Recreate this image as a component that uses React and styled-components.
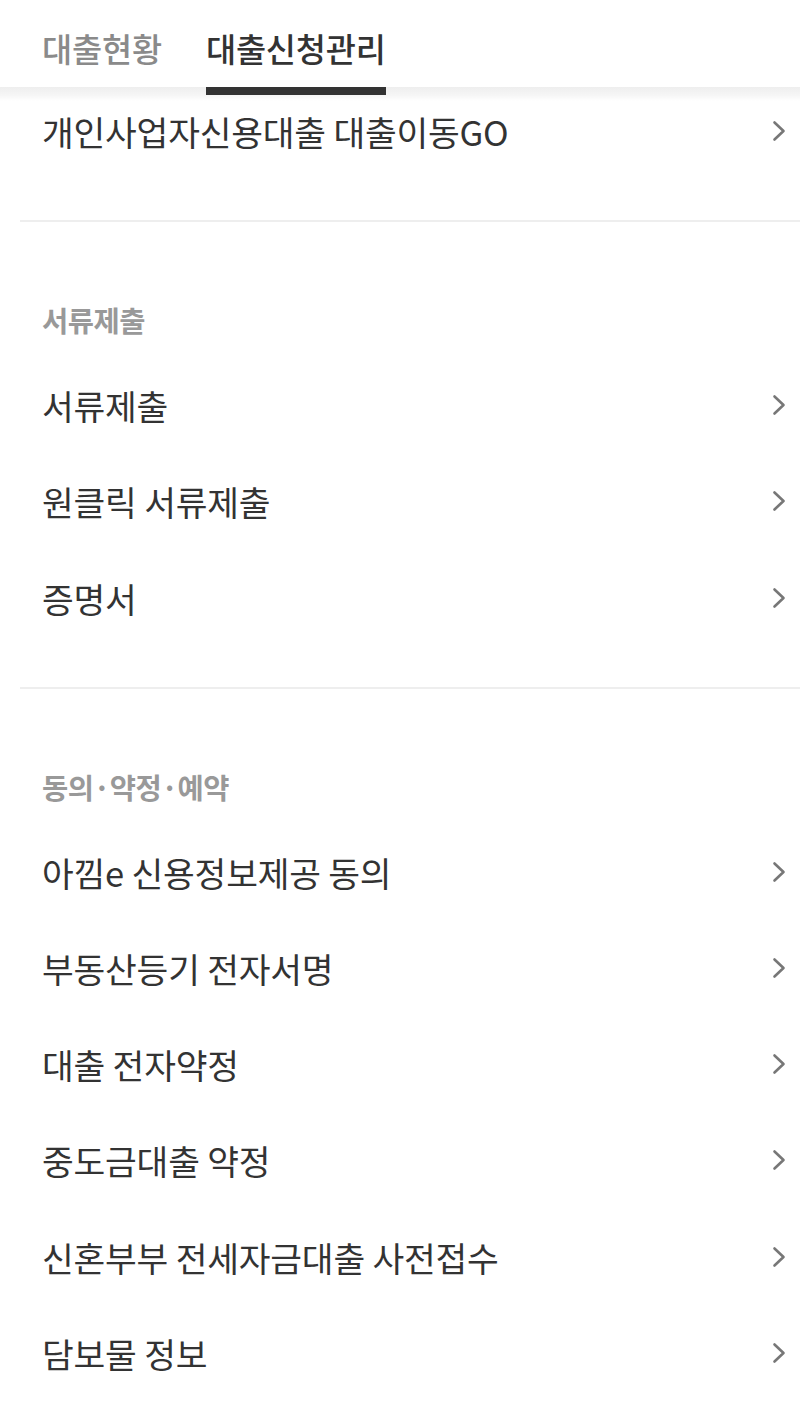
import styled, { createGlobalStyle } from 'styled-components';

const GlobalStyle = createGlobalStyle`
  html, body {
    margin: 0;
    padding: 0;
    background: #fff;
  }
  body {
    font-family: "Noto Sans CJK KR", "Noto Sans", sans-serif;
    color: #333;
  }
`

const Page = styled.div`
  width: 800px;
  min-height: 1424px;
  background: #fff;
`

const Header = styled.div`
  position: sticky;
  top: 0;
  z-index: 2;
  height: 87px;
  margin-bottom: -4px;
  background: #fff;
  display: flex;
  align-items: flex-end;
  padding-left: 42px;
  gap: 44px;

  &::after {
    content: '';
    position: absolute;
    left: 0;
    right: 0;
    top: 87px;
    height: 14px;
    background: linear-gradient(rgba(0, 0, 0, 0.065), rgba(0, 0, 0, 0.035) 60%, rgba(0, 0, 0, 0));
    pointer-events: none;
  }
`

const Tab = styled.div`
  position: relative;
  height: 87px;
  display: flex;
  align-items: center;
  padding-top: 7px;
  box-sizing: border-box;
  font-size: 32.8px;
  font-weight: 500;
  letter-spacing: -0.2px;
  color: ${p => (p.$active ? '#333' : '#8a8a8a')};

  &::after {
    content: '';
    display: ${p => (p.$active ? 'block' : 'none')};
    position: absolute;
    left: 0;
    right: 0;
    top: 87px;
    height: 8px;
    background: #333;
    z-index: 3;
  }
`

const Section = styled.section`
  padding-top: ${p => (p.$first ? '0' : '80px')};
  padding-bottom: 41px;
  border-bottom: ${p => (p.$last ? 'none' : '2px solid #eee')};
  margin-left: 20px;
`

const SectionLabel = styled.div`
  height: 36px;
  line-height: 36px;
  margin-bottom: 19px;
  padding-left: 22px;
  font-size: 28.5px;
  font-weight: 700;
  color: #999;
  letter-spacing: -0.5px;
`

const Row = styled.div`
  height: 96.2px;
  display: flex;
  align-items: center;
  justify-content: space-between;
  padding: 0 14px 0 22px;
  cursor: pointer;
`

const RowText = styled.span`
  font-size: 34.5px;
  font-weight: 400;
  color: #333;
  letter-spacing: -0.2px;
`

const Chevron = () => (
  <svg width="14" height="22" viewBox="0 0 14 22" fill="none">
    <polyline
      points="2.5,2.5 11.5,11 2.5,19.5"
      stroke="#777"
      strokeWidth="2.6"
      strokeLinecap="round"
      strokeLinejoin="round"
    />
  </svg>
)

const sections = [
  { items: ['개인사업자신용대출 대출이동GO'] },
  { label: '서류제출', items: ['서류제출', '원클릭 서류제출', '증명서'] },
  {
    label: '동의·약정·예약',
    items: [
      '아낌e 신용정보제공 동의',
      '부동산등기 전자서명',
      '대출 전자약정',
      '중도금대출 약정',
      '신혼부부 전세자금대출 사전접수',
      '담보물 정보',
    ],
  },
]

export default function App() {
  return (
    <Page>
      <GlobalStyle />
      <Header>
        <Tab>대출현황</Tab>
        <Tab $active>대출신청관리</Tab>
      </Header>
      {sections.map((s, i) => (
        <Section key={i} $first={!s.label} $last={i === sections.length - 1}>
          {s.label && <SectionLabel>{s.label}</SectionLabel>}
          {s.items.map(item => (
            <Row key={item}>
              <RowText>{item}</RowText>
              <Chevron />
            </Row>
          ))}
        </Section>
      ))}
    </Page>
  )
}
